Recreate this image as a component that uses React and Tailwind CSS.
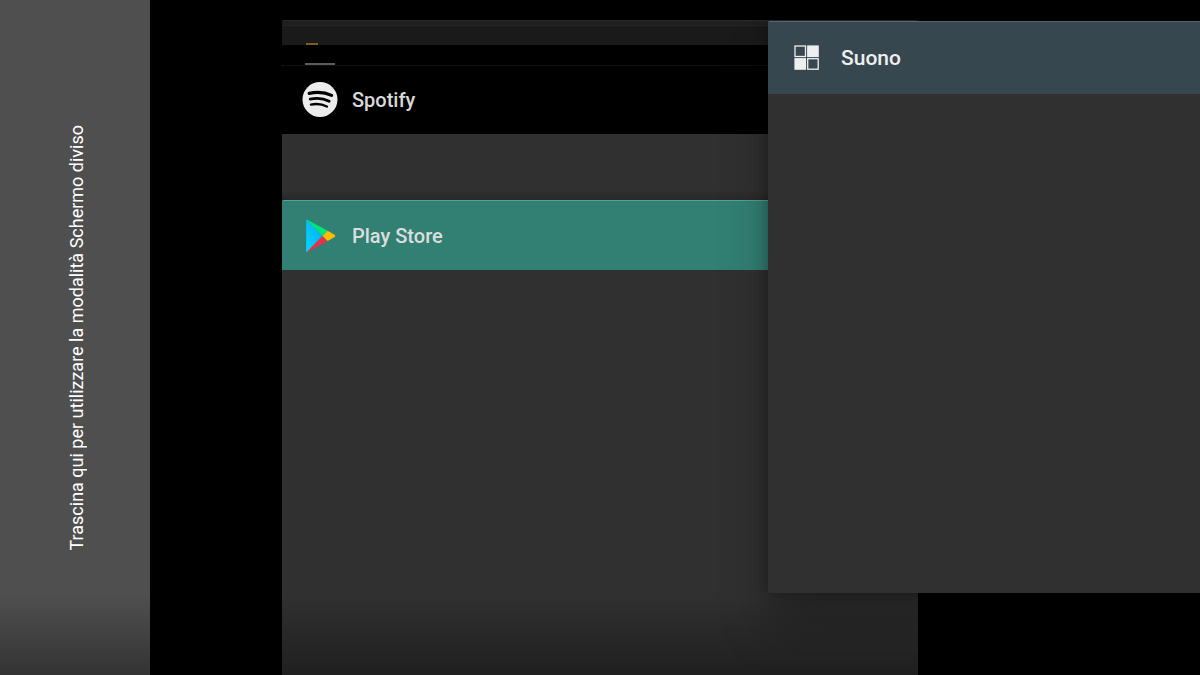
const SpotifyIcon = () => (
    <svg viewBox="0 0 36 36" className="h-9 w-9 shrink-0" aria-hidden="true">
        <circle cx="18" cy="17.5" r="17.5" fill="#ececec" />
        <g fill="none" stroke="#000000" strokeLinecap="round">
            <path d="M7.200 11.400c8-1.700 16-1 22.400 2" strokeWidth="3.200" />
            <path d="M8.200 17.200c6.600-1.500 13.400-.8 19 2" strokeWidth="2.800" />
            <path d="M8.900 22.600c5.700-1.200 11.200-.6 16 2" strokeWidth="2.300" />
        </g>
    </svg>
);

const PlayStoreIcon = () => (
    <svg viewBox="0 0 36 36" className="h-9 w-9 shrink-0" aria-hidden="true">
        <defs>
            <linearGradient id="play-blue" x1="0" y1="1" x2="0.8" y2="0">
                <stop offset="0" stopColor="#00dcff" />
                <stop offset="1" stopColor="#08a9f4" />
            </linearGradient>
        </defs>
        <path d="M4.200 2.500Q4.200 1.600 5 1.900L20.500 17.900 5 34Q4.200 34.200 4.200 33.300Z" fill="url(#play-blue)" />
        <path d="M4.500 1.700Q5 1.500 5.800 1.900L25.700 12.800 20.500 17.900Z" fill="#00e676" />
        <path d="M4.500 34.200Q5 34.400 5.800 33.900L25.700 23 20.500 17.900Z" fill="#e8304a" />
        <path d="M25.700 12.800L32.600 16.700Q34 17.900 32.600 19.100L25.700 23 20.500 17.900Z" fill="#f9be05" />
    </svg>
);

const SoundIcon = () => (
    <svg viewBox="0 0 26 26" className="h-[26px] w-[26px] shrink-0" aria-hidden="true">
        <rect x="1" y="1" width="10.500" height="10.500" fill="none" stroke="#efefef" strokeWidth="1.300" />
        <rect x="13.100" y="0.400" width="11.700" height="11.700" fill="#efefef" />
        <rect x="0.400" y="13.100" width="11.700" height="11.700" fill="#efefef" />
        <rect x="13.700" y="13.700" width="10.500" height="10.500" fill="none" stroke="#efefef" strokeWidth="1.300" />
    </svg>
);

const SplitScreenZone = () => (
    <aside className="flex w-1/8 shrink-0 items-center justify-center bg-[#4f4f4f] pl-1">
        <p className="rotate-180 text-[18px] leading-6 whitespace-nowrap text-white [writing-mode:vertical-rl]">
            Trascina qui per utilizzare la modalità Schermo diviso
        </p>
    </aside>
);

const RecentApps = () => (
    <main className="ml-[11%] flex w-[53%] flex-col pt-5">
        {/* tasks tucked behind the front cards, only their icon edges show */}
        <div className="flex h-[25px] shrink-0 flex-col justify-between rounded-t-xs border-t border-[#2c2c2c] bg-[#1a1a1a]">
            <div className="h-[5px] border-b border-[#242424] bg-[#1f1f1f]" />
            <div className="ml-6 h-[2px] w-3 bg-[#7d6112]" />
        </div>
        <div className="flex h-5 shrink-0 items-end bg-black">
            <div className="ml-[23px] h-[2px] w-[30px] bg-[#5c5c5c]" />
        </div>

        <section className="shrink-0 bg-[#303030]">
            <header className="flex h-[69px] items-center gap-[14px] rounded-t-xs border-t border-[#0e0e0e] bg-black pl-5">
                <SpotifyIcon />
                <h2 className="text-xl font-medium text-[#d9d9d9]">Spotify</h2>
            </header>
            <div className="h-[66px] bg-linear-to-b from-[#303030] from-85% to-[#282828]" />
        </section>

        <section className="flex flex-1 flex-col bg-[#303030]">
            <header className="flex h-[70px] shrink-0 items-center gap-[14px] rounded-t-xs border-t border-[#5a9f93] bg-[#327f74] pl-5">
                <PlayStoreIcon />
                <h2 className="text-xl font-medium text-[#dadfde]">Play Store</h2>
            </header>
        </section>
    </main>
);

const DraggedApp = () => (
    <section className="absolute top-[21px] right-0 bottom-[82px] left-[64%] rounded-l-xs bg-[#303030] shadow-[0_0_14px_rgba(0,0,0,0.3),0_36px_48px_rgba(0,0,0,0.25)]">
        <header className="flex h-[73px] items-center gap-[21px] rounded-tl-xs border-t border-[#566870] bg-[#37474f] pl-[26px]">
            <SoundIcon />
            <h2 className="text-[21px] leading-7 font-medium text-[#efefef]">Suono</h2>
        </header>
    </section>
);

export default function App() {
    return (
        <div className="relative flex h-screen overflow-hidden bg-black font-[Roboto,sans-serif]">
            <SplitScreenZone />
            <RecentApps />
            <div className="pointer-events-none absolute inset-x-0 bottom-0 h-20 bg-linear-to-t from-black/35 to-transparent" />
            <DraggedApp />
        </div>
    );
}
